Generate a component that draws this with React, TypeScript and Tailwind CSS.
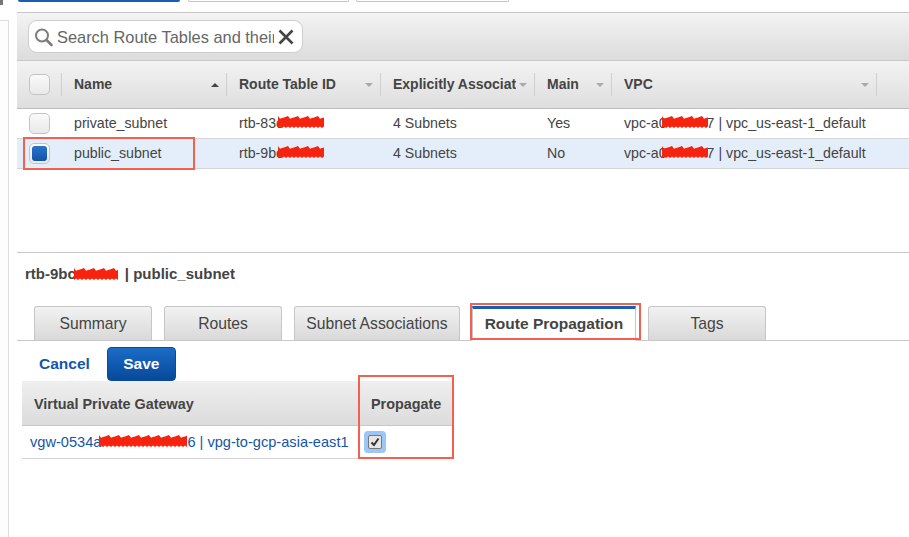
import React from 'react';

const font = { fontFamily: '"Liberation Sans", Arial, sans-serif' };

// rough hand-drawn red scribble hiding ids
const Scribble: React.FC<{ className: string; w: number }> = ({ className, w }) => {
  let top = 'M0 6';
  let bottom = '';
  for (let x = 0; x <= w; x += 2) {
    top += ` L${x} ${1 + ((x * 7) % 5) * 0.7}`;
    bottom = ` L${x} ${13 - ((x * 3) % 4) * 0.8}` + bottom;
  }
  return (
    <span className={`relative inline-block align-middle h-[14px] ${className}`}>
      <svg width={w} height={14} viewBox={`0 0 ${w} 14`} className="absolute left-0 -top-[2px]">
        <path d={`${top}${bottom}Z`} fill="#f6240f" />
      </svg>
    </span>
  );
};

const SortArrow: React.FC<{ up?: boolean }> = ({ up }) => (
  <svg width="8" height="4" viewBox="0 0 8 4" className="shrink-0">
    <path d={up ? 'M4 0L8 4H0z' : 'M0 0h8L4 4z'} fill={up ? '#444444' : '#a9a9a9'} />
  </svg>
);

const HeaderCell: React.FC<{ label: string; up?: boolean }> = ({ label, up }) => (
  <div className="flex h-[23px] min-w-0 items-center gap-[3px] border-r border-[#cfcfcf] pl-3 pr-[7px]">
    <span className="min-w-0 flex-1 overflow-hidden whitespace-nowrap pb-[2px] text-sm font-bold text-[#444444]">
      {label}
    </span>
    <SortArrow up={up} />
  </div>
);

const Box: React.FC<{ checked?: boolean }> = ({ checked }) => (
  <div className="flex h-[21px] w-[21px] items-center justify-center rounded-[5px] border border-[#c4c4c4] bg-gradient-to-b from-[#fafafa] to-[#e9e9e9]">
    {checked && <div className="h-[15px] w-[15px] rounded-[3px] bg-gradient-to-b from-[#2a73cc] to-[#0f56a8]" />}
  </div>
);

const columns = 'grid grid-cols-[45px_165px_154px_154px_77px_265px_1fr]';

const Row: React.FC<{
  name: string;
  id: string;
  main: string;
  selected?: boolean;
}> = ({ name, id, main, selected }) => (
  <div
    className={`${columns} h-[30px] items-center border-b border-[#d5d5d5] text-[14.2px] text-[#444444] ${
      selected ? 'bg-[#e4eefa]' : 'bg-white'
    }`}
  >
    <div className="pl-[12px]">
      <Box checked={selected} />
    </div>
    <div className="pl-3">{name}</div>
    <div className="whitespace-nowrap pl-3">
      {id}
      <Scribble className="-ml-[5px] w-[47px]" w={47} />
    </div>
    <div className="pl-3">4 Subnets</div>
    <div className="pl-3">{main}</div>
    <div className="whitespace-nowrap pl-3">
      vpc-a0
      <Scribble className="-ml-[5px] -mr-[2px] w-[47px]" w={47} />7 | vpc_us-east-1_default
    </div>
    <div />
  </div>
);

const Tab: React.FC<{ label: string; width: string }> = ({ label, width }) => (
  <div
    className={`flex h-[34px] items-center justify-center rounded-t-[3px] border border-b-0 border-[#c6c6c6] bg-gradient-to-b from-[#f2f2f2] to-[#d9d9d9] text-[15.7px] text-[#444444] ${width}`}
  >
    {label}
  </div>
);

// annotation rectangles drawn on top of the screenshot
const RedBox: React.FC<{ className: string }> = ({ className }) => (
  <div className={`pointer-events-none absolute border-2 border-[#f4604f] ${className}`} />
);

export default function App() {
  return (
    <div className="relative flex h-[537px] w-[909px] overflow-hidden bg-white" style={font}>
      {/* left nav edge */}
      <div className="flex w-[9px] shrink-0 flex-col">
        <div className="h-[5px] w-[3px] bg-[#777777]" />
        <div className="mt-[15px] flex-1 border-r border-t border-[#dddddd] bg-[#fdfdfd]" />
      </div>

      <div className="min-w-0 flex-1">
        {/* action buttons cut off by the crop */}
        <div className="flex h-[12px] items-start gap-[8px] pl-[9px]">
          <div className="h-[2px] w-[162px] rounded-b-[3px] bg-[#1560b5]" />
          <div className="h-[2px] w-[161px] rounded-b-[3px] border-b border-x border-[#c4c4c4]" />
          <div className="-ml-[1px] h-[2px] w-[153px] rounded-b-[3px] border-b border-x border-[#c4c4c4]" />
        </div>

        <div className="ml-[8px]">
          {/* search toolbar */}
          <div className="flex h-[49px] items-center border-y border-[#c8c8c8] bg-gradient-to-b from-[#f3f3f3] to-[#dcdcdc] pl-[11px]">
            <div className="flex h-[33px] w-[275px] items-center rounded-[9px] border border-[#cdcdcd] bg-white pl-[5px]">
              <svg width="20" height="20" viewBox="0 0 20 20" className="shrink-0">
                <circle cx="8" cy="8.5" r="6" fill="none" stroke="#7d7d7d" strokeWidth="2" />
                <path d="M12.5 13l5 5" stroke="#7d7d7d" strokeWidth="2.6" strokeLinecap="round" />
              </svg>
              <span className="ml-[3px] w-[217px] overflow-hidden whitespace-nowrap pt-[2px] text-[16.4px] text-[#666666]">
                Search Route Tables and their associations
              </span>
              <svg width="16" height="16" viewBox="0 0 16 16" className="ml-[4px] shrink-0">
                <path d="M1.5 1.5l13 13M14.5 1.5l-13 13" stroke="#444444" strokeWidth="2.6" />
              </svg>
            </div>
          </div>

          {/* table header */}
          <div className={`${columns} h-[48px] items-center border-b border-[#bdbdbd] bg-gradient-to-b from-[#f3f3f3] to-[#dedede]`}>
            <div className="flex h-[23px] items-center border-r border-[#cfcfcf] pl-[12px]">
              <Box />
            </div>
            <HeaderCell label="Name" up />
            <HeaderCell label="Route Table ID" />
            <HeaderCell label="Explicitly Associated With" />
            <HeaderCell label="Main" />
            <HeaderCell label="VPC" />
            <div />
          </div>

          <Row name="private_subnet" id="rtb-83c" main="Yes" />
          <Row name="public_subnet" id="rtb-9bc" main="No" selected />

          {/* detail pane */}
          <div className="mt-[83px] border-t border-[#c8c8c8]">
            <div className="flex h-[42px] items-center whitespace-nowrap pl-[8px] text-[15px] font-bold text-[#444444]">
              rtb-9bc
              <Scribble className="-ml-[2px] w-[45px] translate-y-[2px]" w={45} />
              <span className="ml-[6px]">| public_subnet</span>
            </div>

            <div className="mt-[10px] flex h-[36px] items-end gap-[12px] border-b border-[#c8c8c8] pl-[17px]">
              <Tab label="Summary" width="w-[118px]" />
              <Tab label="Routes" width="w-[118px]" />
              <Tab label="Subnet Associations" width="w-[166px]" />
              <div className="-mb-[1px] flex h-[35px] w-[164px] items-center justify-center border-x border-b border-t-[3px] border-x-[#c6c6c6] border-b-white border-t-[#1560b5] bg-white pb-[1px] text-[15.5px] font-bold text-[#444444]">
                Route Propagation
              </div>
              <Tab label="Tags" width="w-[118px]" />
            </div>

            <div className="flex h-[40px] items-start pl-[22px] pt-[6px]">
              <span className="mt-[7px] text-[15.5px] font-bold leading-[20px] text-[#1456a8]">Cancel</span>
              <div className="ml-[17px] flex h-[34px] w-[69px] items-center justify-center rounded-[4px] border border-[#0b4a96] bg-gradient-to-b from-[#1b6cc8] to-[#07499a] text-[15.5px] font-bold text-white">
                Save
              </div>
            </div>

            {/* propagation table */}
            <div className="ml-[5px] w-[430px]">
              <div className="grid h-[45px] grid-cols-[337px_1fr] items-center border-b border-[#c8c8c8] bg-gradient-to-b from-[#efefef] to-[#dcdcdc] text-[14.4px] font-bold text-[#444444]">
                <div className="flex h-full items-center border-r border-[#d0d0d0] pl-3 pt-[3px]">Virtual Private Gateway</div>
                <div className="pl-[12px] pt-[3px]">Propagate</div>
              </div>
              <div className="grid h-[33px] grid-cols-[337px_1fr] items-center border-b border-[#d5d5d5] text-[14.6px] text-[#1456a8]">
                <div className="whitespace-nowrap pl-[8px] pt-[2px]">
                  vgw-0534a
                  <Scribble className="-ml-[2px] w-[88px]" w={88} />
                  6 | vpg-to-gcp-asia-east1
                </div>
                <div className="pl-[5px]">
                  <div className="flex h-[22px] w-[22px] items-center justify-center rounded-[4px] bg-[#9cc6f5]">
                    <div className="flex h-[14px] w-[14px] items-center justify-center rounded-[2px] border border-[#777777] bg-[#e6e6e6]">
                      <svg width="10" height="10" viewBox="0 0 10 10">
                        <path d="M1.5 5.5l2.5 2.5 4.5-6.5" fill="none" stroke="#333333" strokeWidth="2" />
                      </svg>
                    </div>
                  </div>
                </div>
              </div>
            </div>
          </div>
        </div>
      </div>

      <RedBox className="left-[23px] top-[137px] h-[33px] w-[172px]" />
      <RedBox className="left-[470px] top-[303px] h-[37px] w-[171px]" />
      <RedBox className="left-[358px] top-[375px] h-[84px] w-[96px]" />
    </div>
  );
}
